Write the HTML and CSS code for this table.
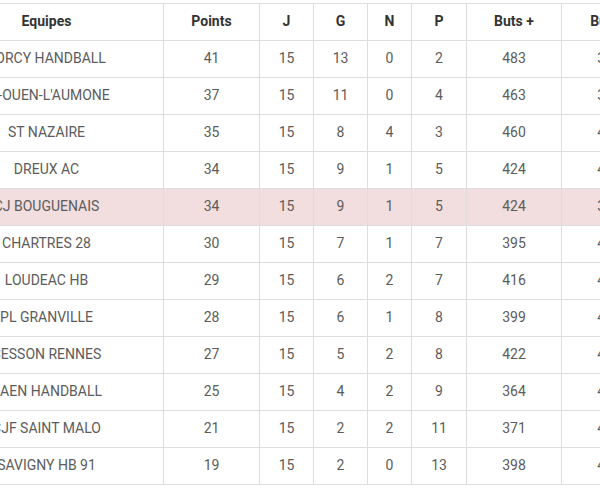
FILE: index.html
```html
<!DOCTYPE html>
<html lang="fr">
<head>
<meta charset="utf-8">
<title>Classement</title>
<link rel="stylesheet" href="styles.css">
</head>
<body>
<div class="scroller">
  <table class="standings">
    <colgroup>
      <col class="c-team">
      <col class="c-pts">
      <col class="c-j">
      <col class="c-g">
      <col class="c-n">
      <col class="c-p">
      <col class="c-bp">
      <col class="c-bm">
      <col class="c-diff">
    </colgroup>
    <thead>
      <tr><th>Equipes</th><th>Points</th><th>J</th><th>G</th><th>N</th><th>P</th><th>Buts +</th><th>Buts -</th><th>Diff</th></tr>
    </thead>
    <tbody>
      <tr><td>TORCY HANDBALL</td><td>41</td><td>15</td><td>13</td><td>0</td><td>2</td><td>483</td><td>389</td><td>94</td></tr>
      <tr><td>ST-OUEN-L'AUMONE</td><td>37</td><td>15</td><td>11</td><td>0</td><td>4</td><td>463</td><td>397</td><td>66</td></tr>
      <tr><td>ST NAZAIRE</td><td>35</td><td>15</td><td>8</td><td>4</td><td>3</td><td>460</td><td>421</td><td>39</td></tr>
      <tr><td>DREUX AC</td><td>34</td><td>15</td><td>9</td><td>1</td><td>5</td><td>424</td><td>412</td><td>12</td></tr>
      <tr class="highlight"><td>CJ BOUGUENAIS</td><td>34</td><td>15</td><td>9</td><td>1</td><td>5</td><td>424</td><td>398</td><td>26</td></tr>
      <tr><td>CHARTRES 28</td><td>30</td><td>15</td><td>7</td><td>1</td><td>7</td><td>395</td><td>401</td><td>-6</td></tr>
      <tr><td>LOUDEAC HB</td><td>29</td><td>15</td><td>6</td><td>2</td><td>7</td><td>416</td><td>428</td><td>-12</td></tr>
      <tr><td>PL GRANVILLE</td><td>28</td><td>15</td><td>6</td><td>1</td><td>8</td><td>399</td><td>419</td><td>-20</td></tr>
      <tr><td>CESSON RENNES</td><td>27</td><td>15</td><td>5</td><td>2</td><td>8</td><td>422</td><td>430</td><td>-8</td></tr>
      <tr><td>CAEN HANDBALL</td><td>25</td><td>15</td><td>4</td><td>2</td><td>9</td><td>364</td><td>412</td><td>-48</td></tr>
      <tr><td>CJF SAINT MALO</td><td>21</td><td>15</td><td>2</td><td>2</td><td>11</td><td>371</td><td>446</td><td>-75</td></tr>
      <tr><td>SAVIGNY HB 91</td><td>19</td><td>15</td><td>2</td><td>0</td><td>13</td><td>398</td><td>449</td><td>-51</td></tr>
    </tbody>
  </table>
</div>
</body>
</html>
```

FILE: styles.css
```css
html, body {
  margin: 0;
  padding: 0;
  background: #ffffff;
}

body {
  font-family: Roboto, "Liberation Sans", Arial, sans-serif;
  font-size: 14px;
  line-height: 20px;
  color: #5c5c5c;
}

.scroller {
  width: 600px;
  height: 490px;
  overflow: hidden;
  padding-top: 3px;
  box-sizing: border-box;
}

.standings {
  border-collapse: collapse;
  table-layout: fixed;
  width: 797px;
  margin-left: -71px;
}

.c-team { width: 234px; }
.c-pts { width: 96px; }
.c-j { width: 54px; }
.c-g { width: 54px; }
.c-n { width: 44px; }
.c-p { width: 55px; }
.c-bp { width: 95px; }
.c-bm { width: 95px; }
.c-diff { width: 70px; }

.standings th,
.standings td {
  border: 1px solid #dddddd;
  padding: 7px 8px 9px;
  text-align: center;
  vertical-align: middle;
  white-space: nowrap;
}

.standings th {
  color: #333333;
  font-weight: 700;
}

.standings .highlight td {
  background: #f2dede;
}
```
